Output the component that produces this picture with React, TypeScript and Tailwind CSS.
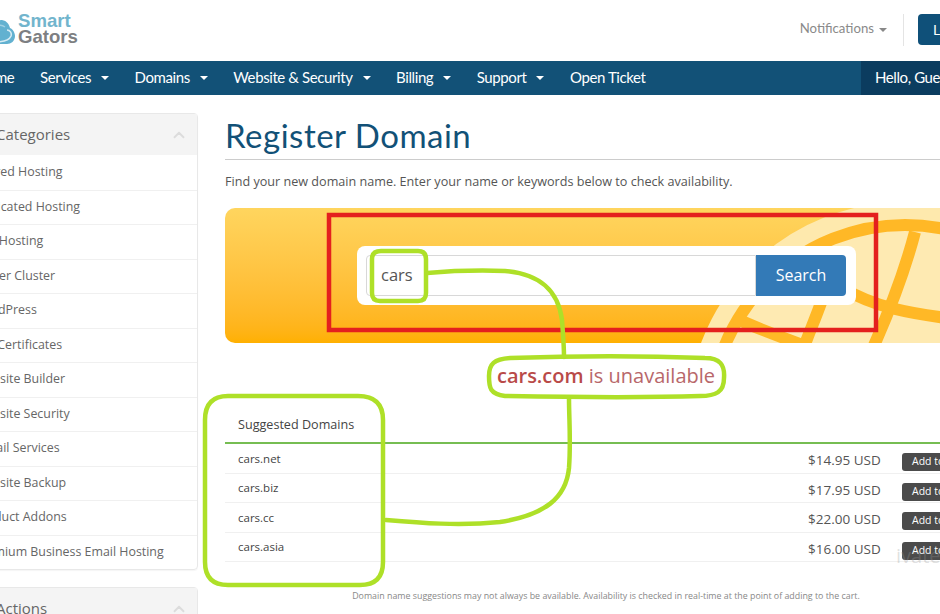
import React from "react";
import { ChevronUp } from "lucide-react";

const cats = [
  "Shared Hosting",
  "Dedicated Hosting",
  "VPS Hosting",
  "Server Cluster",
  "WordPress",
  "SSL Certificates",
  "Website Builder",
  "Website Security",
  "E-mail Services",
  "Website Backup",
  "Product Addons",
  "Premium Business Email Hosting",
];

const nav = [
  { t: "Services", c: true },
  { t: "Domains", c: true },
  { t: "Website & Security", c: true },
  { t: "Billing", c: true },
  { t: "Support", c: true },
  { t: "Open Ticket", c: false },
];

const rows = [
  ["cars.net", "$14.95 USD"],
  ["cars.biz", "$17.95 USD"],
  ["cars.cc", "$22.00 USD"],
  ["cars.asia", "$16.00 USD"],
];

function Caret({ className }: { className: string }) {
  return <span className={"inline-block w-0 h-0 border-x-[4px] border-x-transparent border-t-[4px] " + className} />;
}

function Logo() {
  return (
    <div className="flex items-center -ml-[13px] -mt-[2px]">
      <svg width="28" height="30" viewBox="0 0 28 30" className="shrink-0 mt-[3px]">
        <path d="M6 29C2 29 0 26 0 22c-1-4 1-8 5-9 1-5 5-8 10-8 5 1 7 4 8 8 3 1 5 5 5 8 0 5-4 8-8 8z" fill="#62b1d0" />
        <path d="M8 27c6 0 14-1 16-6 1-3-1-6-4-6" fill="none" stroke="#d5ebf3" strokeWidth="1.6" />
        <path d="M6 15c3-5 8-6 12-3" fill="none" stroke="#9fd0e3" strokeWidth="1.4" />
      </svg>
      <div className="ml-[3px] font-['Liberation_Sans',sans-serif] font-bold text-[18.6px] leading-[16px]">
        <div className="text-[#72b5cd]">Smart</div>
        <div className="text-[#7d7f82]">Gators</div>
      </div>
    </div>
  );
}

function Globe() {
  return (
    <svg width="285" height="135" viewBox="700 208 285 135" className="absolute left-[475px] top-0" fill="none">
      <circle cx="905" cy="420" r="209" stroke="#fee9ad" strokeWidth="18" />
      <circle cx="905" cy="420" r="195" fill="#feeab2" stroke="#ffb826" strokeWidth="12" />
      <g stroke="#ffb826" strokeWidth="12">
        <path d="M915 232 C905 270 890 310 872 350" />
        <path d="M843 288 C870 305 905 315 985 322" />
        <path d="M822 300 C815 320 808 335 803 350" />
        <path d="M735 318 C760 330 785 338 805 346" />
      </g>
    </svg>
  );
}

function Overlay() {
  return (
    <svg width="940" height="614" viewBox="0 0 940 614" className="absolute left-0 top-0 pointer-events-none" fill="none">
      <rect x="329" y="215" width="547" height="115" stroke="#e4201e" strokeWidth="4.5" />
      <g stroke="#aee028" strokeWidth="4.5" strokeLinecap="round" strokeLinejoin="round">
        <path d="M381 251 H418 Q426 251 426 259 V293 Q426 301 418 301 H380 Q372 301 372 293 V259 Q372 251 381 251 Z" />
        <path d="M427 273 C450 271 475 270 505 271 C540 274 558 290 562 320 C563 335 564 345 564 357" />
        <path d="M510 358 C570 356 650 356 705 358 C720 358 725 365 724 378 C724 392 716 396 700 396 C640 398 560 397 505 396 C490 394 489 388 489 376 C489 364 494 359 510 358 Z" />
        <path d="M569 398 C569 420 571 440 569 468 C566 498 545 515 500 522 C460 526 420 523 386 520" />
        <path d="M228 396 H358 Q383 396 383 420 V562 Q383 585 360 585 H228 Q205 585 205 562 V420 Q205 396 228 396 Z" />
      </g>
    </svg>
  );
}

export default function App() {
  return (
    <div className="relative w-[940px] h-[614px] overflow-hidden bg-white font-['Open_Sans',sans-serif] text-[#555]">
      <header className="h-[61px] flex items-center justify-between pb-[2px]">
        <Logo />
        <div className="flex items-center h-[32px] -mr-[40px]">
          <span className="flex items-center gap-[5px] font-['Lato',sans-serif] text-[13.2px] text-[#8a8a8a] pr-[16px] h-[32px] border-r border-[#e4e4e4]">
            <span className="-mt-[2px]">Notifications</span>
            <Caret className="border-t-[#888]" />
          </span>
          <span className="ml-[14px] w-[62px] h-[31px] rounded-[4px] bg-[#0f5079] text-white text-[14px] font-['Lato',sans-serif] flex items-center pl-[15px]">Login</span>
        </div>
      </header>

      <nav className="h-[34px] bg-[#125177] flex items-center justify-between text-white font-['Lato',sans-serif] text-[15px] tracking-[-0.4px]">
        <div className="flex items-center -ml-[24px] pb-[1px]">
          <span className="w-[64px]">Home</span>
          {nav.map((n) => (
            <span key={n.t} className="flex items-center gap-[10px] mr-[25.5px]">
              {n.t}
              {n.c && <Caret className="border-t-white" />}
            </span>
          ))}
        </div>
        <div className="h-full w-[79px] bg-[#0b3c5f] pl-[14px] pb-[1px] flex items-center whitespace-nowrap overflow-hidden">Hello, Guest</div>
      </nav>

      <div className="flex mt-[18px]">
        <aside className="w-[229px] -ml-[31px] shrink-0">
          <div className="border border-[#e8e8e8] rounded-[4px] shadow-[0_1px_1px_rgba(0,0,0,0.04)]">
            <div className="h-[41px] bg-[#f4f4f4] flex items-center justify-between pl-[26px] pr-[9px] text-[15px] text-[#666]">
              <span>Categories</span>
              <ChevronUp size={18} strokeWidth={2.5} className="text-[#dcdcdc]" />
            </div>
            {cats.map((c, i) => (
              <div key={c} className={"h-[34.5px] flex items-center pl-[4px] text-[12.4px] text-[#666] whitespace-nowrap " + (i ? "border-t border-[#f0f0f0]" : "")}>
                {c}
              </div>
            ))}
          </div>
          <div className="mt-[17px] border border-[#e8e8e8] rounded-[4px]">
            <div className="h-[41px] bg-[#f4f4f4] flex items-center justify-between pl-[26px] pr-[9px] text-[15px] text-[#666]">
              <span>Actions</span>
              <ChevronUp size={18} strokeWidth={2.5} className="text-[#dcdcdc]" />
            </div>
          </div>
        </aside>

        <main className="ml-[27px] w-[760px] shrink-0">
          <h1 className="font-['Lato',sans-serif] font-normal text-[33px] leading-[44px] tracking-[0.5px] text-[#125177] h-[46px] border-b border-[#ccc] box-content">
            Register Domain
          </h1>
          <p className="mt-[13px] text-[12.62px] leading-[18px] text-[#555]">
            Find your new domain name. Enter your name or keywords below to check availability.
          </p>
          <div className="relative mt-[17px] h-[135px] rounded-[10px] bg-gradient-to-b from-[#ffd55e] to-[#ffb000] overflow-hidden flex items-start pl-[132px] pt-[38px]">
            <Globe />
            <div className="relative w-[499px] h-[59px] rounded-[8px] bg-white pl-[9px] pr-[10px] pt-[9px] flex">
              <div className="flex-1 h-[41px] border border-[#d8d8d8] rounded-l-[4px] flex items-center pl-[14px] text-[16.5px] text-[#555]">cars</div>
              <div className="w-[90px] h-[41px] rounded-r-[4px] bg-[#337ab7] text-white text-[16px] pb-[1px] flex items-center justify-center">Search</div>
            </div>
          </div>
          <div className="mt-[19px] text-center text-[20px] leading-[28px] text-[#b8676a] w-[762px]">
            <span className="font-semibold text-[#b94a48]">cars.com</span> is unavailable
          </div>
          <div className="mt-[21px]">
            <div className="h-[33px] pl-[13px] pb-[3px] flex items-center text-[12.6px] text-[#444] border-b-2 border-[#76bd52]">Suggested Domains</div>
            {rows.map(([d, p]) => (
              <div key={d} className="h-[29.5px] flex items-center border-b border-[#f0f0f0] pl-[13px]">
                <span className="text-[11.5px] font-medium text-[#444] w-[570px]">{d}</span>
                <span className="relative top-[2px] text-[13.5px] text-[#555] w-[94px]">{p}</span>
                <span className="relative top-[4px] w-[70px] h-[18px] rounded-[3px] bg-[#4b4b4b] text-white text-[10.5px] flex items-center pl-[10px] whitespace-nowrap">Add to Cart</span>
              </div>
            ))}
            <p className="mt-[28px] text-center text-[8.85px] text-[#888] w-[762px]">
              Domain name suggestions may not always be available. Availability is checked in real-time at the point of adding to the cart.
            </p>
          </div>
        </main>
      </div>
      <Overlay />
      <span className="absolute left-[896px] top-[541px] text-[20px] text-[#999]/30 whitespace-nowrap">ivate</span>
    </div>
  );
}
